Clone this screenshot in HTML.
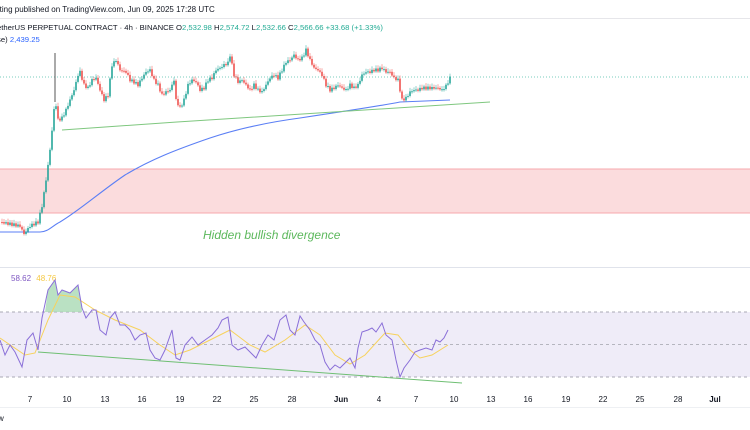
<!DOCTYPE html>
<html><head><meta charset="utf-8"><style>
body{margin:0;width:750px;height:430px;overflow:hidden;background:#fff;font-family:"Liberation Sans",sans-serif;}
svg{position:absolute;left:0;top:0}
</style></head><body>
<svg id="s" width="750" height="430" xmlns="http://www.w3.org/2000/svg">
<line x1="0" y1="18.5" x2="750" y2="18.5" stroke="#e6e6ea"/>
<text x="-3" y="12" font-size="8" fill="#131722">rting published on TradingView.com, Jun 09, 2025 17:28 UTC</text>
<text x="-3" y="30" font-size="7.7" fill="#131722">etherUS PERPETUAL CONTRACT · 4h · BINANCE  <tspan>O</tspan><tspan fill="#22ab94">2,532.98</tspan>  H<tspan fill="#22ab94">2,574.72</tspan>  L<tspan fill="#22ab94">2,532.66</tspan>  C<tspan fill="#22ab94">2,566.66</tspan>  <tspan fill="#22ab94">+33.68 (+1.33%)</tspan></text>
<text x="-3" y="42" font-size="7.7" fill="#131722">se)  <tspan fill="#2962ff">2,439.25</tspan></text>
<line x1="0" y1="77" x2="750" y2="77" stroke="#22ab94" stroke-dasharray="1 2" opacity="0.6"/>
<rect x="-2" y="169" width="754" height="44" fill="#fbdcdd" stroke="#f7a9ad"/>
<text x="203" y="239" font-size="12" font-style="italic" fill="#5cb85c">Hidden bullish divergence</text>
<line x1="0" y1="267.5" x2="750" y2="267.5" stroke="#e0e3eb"/>
<rect x="0" y="312" width="750" height="65" fill="#efecf8"/>
<line x1="0" y1="312" x2="750" y2="312" stroke="#a9a9b4" stroke-dasharray="3 3"/>
<line x1="0" y1="344.5" x2="750" y2="344.5" stroke="#b5b5bf" stroke-dasharray="3 3"/>
<line x1="0" y1="377" x2="750" y2="377" stroke="#a9a9b4" stroke-dasharray="3 3"/>
<text x="11" y="281" font-size="8" fill="#7e57c2">58.62 <tspan fill="#f5c842" dx="3">48.76</tspan></text>
<line x1="0" y1="407.5" x2="750" y2="407.5" stroke="#eef0f3"/>
<g id="ax" font-size="8" fill="#131722" text-anchor="middle"></g>
<text x="-2" y="421" font-size="8" fill="#131722">w</text>
</svg>
<script>
const s=document.getElementById('s'),NS='http://www.w3.org/2000/svg';
function el(n,a){const e=document.createElementNS(NS,n);for(const k in a)e.setAttribute(k,a[k]);s.appendChild(e);return e;}
function pts(a){return a.map(p=>p.join(',')).join(' ');}
el('path',{d:'M0,232 L40,232 C48,232 52,226 60,222 C80,210 100,192 125,175 C150,160 175,150 210,138 C240,128 270,122 300,118 C340,112 380,106 400,102 L450,100',fill:'none',stroke:'#5b7ff5','stroke-width':1.1});
el('polyline',{points:pts([[62,130],[177,122],[490,102]]),fill:'none',stroke:'#7fc77f','stroke-width':1});
el('line',{x1:55,y1:53,x2:55,y2:102,stroke:'#555','stroke-width':1});
const P=[[0,222],[20,226],[24,234],[30,226],[38,222],[42,206],[46,180],[50,150],[54,110],[56,105],[58,120],[62,118],[66,110],[70,100],[74,90],[78,75],[80,72],[84,85],[88,88],[92,80],[96,78],[100,90],[104,100],[108,95],[112,65],[116,60],[120,70],[126,72],[130,80],[134,82],[138,85],[142,78],[146,72],[150,70],[154,80],[158,85],[162,95],[166,92],[170,90],[174,80],[176,100],[180,108],[184,100],[188,85],[192,80],[196,82],[200,90],[204,88],[208,80],[212,78],[216,70],[220,68],[224,65],[228,63],[230,55],[234,75],[238,82],[242,80],[246,85],[250,90],[254,85],[258,90],[262,92],[266,85],[270,78],[274,75],[278,78],[282,70],[286,62],[290,60],[294,55],[298,60],[302,58],[306,50],[310,60],[314,68],[318,70],[322,75],[326,85],[330,90],[334,88],[338,85],[342,88],[346,90],[350,85],[354,88],[358,85],[362,75],[366,72],[370,72],[374,70],[378,70],[382,68],[386,72],[390,72],[394,78],[398,80],[402,100],[406,98],[410,92],[414,90],[418,90],[422,88],[426,88],[430,88],[434,88],[438,88],[442,90],[446,86],[450,78]];
let prev=P[0][1];
for(let i=1;i<P.length;i++){const [x0,y0]=P[i-1],[x1,y1]=P[i];const n=Math.max(1,Math.round((x1-x0)/2));
 for(let k=1;k<=n;k++){const x=x0+(x1-x0)*k/n;let y=y0+(y1-y0)*k/n+Math.sin(x*1.7)*1.5;
  const up=y<prev,c=up?'#26a69a':'#ef5350';const top=Math.min(y,prev),h=Math.max(1,Math.abs(y-prev));
  el('line',{x1:x,y1:top-1.5-Math.abs(Math.sin(x))*2,x2:x,y2:top+h+1.5,stroke:c,'stroke-width':0.5});
  el('rect',{x:x-0.8,y:top,width:1.6,height:h,fill:c});prev=y;}}
el('polygon',{points:pts([[45,312],[48,290],[55,280],[58,295],[62,290],[70,293],[78,285],[82,308],[82,312]]),fill:'#a9d9b4',opacity:0.8});
el('polyline',{points:pts([[38,352],[462,383]]),fill:'none',stroke:'#6fbf73','stroke-width':1});
el('polyline',{points:pts([[0,338],[25,355],[35,353],[48,320],[60,295],[75,297],[95,310],[115,320],[140,330],[160,345],[175,355],[190,350],[210,340],[230,330],[250,345],[265,352],[285,340],[305,325],[320,335],[335,355],[350,364],[365,355],[385,333],[398,335],[410,350],[420,358],[432,355],[448,345]]),fill:'none',stroke:'#f7d25c','stroke-width':1});
el('polyline',{points:pts([[0,340],[5,355],[10,345],[15,352],[22,367],[27,340],[33,333],[38,350],[42,318],[48,290],[55,280],[58,295],[62,290],[70,293],[78,285],[82,308],[86,318],[92,310],[96,310],[100,330],[106,335],[110,318],[115,312],[120,325],[125,325],[130,330],[135,340],[140,335],[146,333],[150,350],[155,358],[160,360],[165,350],[172,330],[176,358],[180,360],[185,345],[192,337],[198,345],[205,340],[212,335],[218,328],[222,320],[228,317],[232,345],[238,350],[245,347],[250,352],[256,358],[262,345],[268,335],[274,340],[280,320],[286,315],[290,330],[295,335],[300,316],[304,322],[310,330],[315,340],[320,345],[325,362],[330,370],[335,365],[340,368],[345,363],[350,358],[355,368],[358,348],[362,332],[368,330],[372,328],[376,332],[382,323],[386,335],[392,340],[396,360],[400,377],[404,368],[410,360],[415,352],[420,350],[426,348],[432,350],[436,340],[440,342],[444,338],[448,330]]),fill:'none',stroke:'#8a6fd8','stroke-width':1});
const ax=document.getElementById('ax');
[['7',30],['10',67],['13',105],['16',142],['19',180],['22',217],['25',254],['28',292],['Jun',341],['4',379],['7',416],['10',454],['13',491],['16',528],['19',566],['22',603],['25',640],['28',678],['Jul',715]].forEach(([t,x])=>{const e=document.createElementNS(NS,'text');e.setAttribute('x',x);e.setAttribute('y',402);if(t=='Jun'||t=='Jul')e.setAttribute('font-weight','bold');e.textContent=t;ax.appendChild(e);});
</script>
</body></html>
